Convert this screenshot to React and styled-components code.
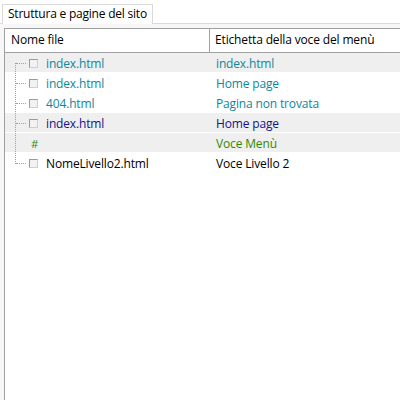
import React from "react";
import styled, { createGlobalStyle } from "styled-components";

const Global = createGlobalStyle`
  html, body { margin: 0; padding: 0; background: #ffffff; }
  body { font-family: "Open Sans", "Noto Sans", sans-serif; font-size: 12px; color: #000; }
  #root { width: 400px; height: 400px; overflow: hidden; }
`;

const Frame = styled.div`
  width: 400px;
  height: 400px;
  display: flex;
  flex-direction: column;
  background: #ffffff;
`;

const TabStrip = styled.div`
  height: 23px;
  display: flex;
  align-items: flex-end;
  padding-left: 2px;
  border-bottom: 1px solid #d9d9d9;
`;

const Tab = styled.div`
  height: 20px;
  box-sizing: border-box;
  padding: 0 5px 0 5px;
  border: 1px solid #d9d9d9;
  border-bottom: none;
  background: #ffffff;
  line-height: 18px;
  letter-spacing: -0.22px;
  margin-bottom: -1px;
`;

const Body = styled.div`
  flex: 1;
  display: flex;
  padding: 4px 0 0 4px;
  background: #f7f7f7;
`;

const Panel = styled.div`
  flex: 1;
  background: #ffffff;
  border-left: 1px solid #a0a0a0;
  border-top: 1px solid #a0a0a0;
`;

const Header = styled.div`
  display: grid;
  grid-template-columns: 205px 1fr;
  height: 23px;
  border-bottom: 1px solid #a0a0a0;
`;

const HeadCell = styled.div`
  padding-left: ${(p) => p.$pad}px;
  line-height: 22px;
  letter-spacing: -0.15px;
  border-right: ${(p) => (p.$sep ? "1px solid #a0a0a0" : "none")};
`;

const Row = styled.div`
  display: grid;
  grid-template-columns: 206px 1fr;
  height: 20px;
  box-sizing: border-box;
  border-bottom: 1px solid #ffffff;
  background: ${(p) => (p.$shade ? "#efefef" : "#ffffff")};
  color: ${(p) => p.$color};
  letter-spacing: -0.15px;
`;

const NameCell = styled.div`
  display: flex;
  align-items: center;
  padding-left: 10px;
  padding-bottom: 2px;
`;

const LabelCell = styled.div`
  display: flex;
  align-items: center;
  padding-left: 5px;
  padding-bottom: 2px;
`;

const Connector = styled.div`
  position: relative;
  width: 11px;
  height: 20px;
  align-self: flex-start;
  flex: none;
  &::before {
    content: "";
    position: absolute;
    left: 0;
    top: ${(p) => (p.$first ? "10px" : "0")};
    bottom: ${(p) => (p.$last ? "9px" : "-1px")};
    border-left: 1px dotted #a0a0a0;
  }
  &::after {
    content: "";
    display: ${(p) => (p.$branch ? "block" : "none")};
    position: absolute;
    left: 1px;
    top: 10px;
    width: 10px;
    border-top: 1px dotted #a0a0a0;
  }
`;

const Check = styled.span`
  width: 9px;
  height: 9px;
  box-sizing: border-box;
  border: 1px solid #9a9a9a;
  border-right-color: #cfcfcf;
  border-bottom-color: #cfcfcf;
  background: #f2f2f2;
  margin: 1px 8px 0 3px;
  flex: none;
`;

const Hash = styled.span`
  margin-left: 5px;
  color: #3b8a00;
  font-size: 11.5px;
`;

const rows = [
  { file: "index.html", label: "index.html", color: "#0e869c", shade: true },
  { file: "index.html", label: "Home page", color: "#0e869c" },
  { file: "404.html", label: "Pagina non trovata", color: "#0e869c" },
  { file: "index.html", label: "Home page", color: "#12128c", shade: true },
  { hash: true, label: "Voce Menù", color: "#2f8a00", shade: true },
  { file: "NomeLivello2.html", label: "Voce Livello 2", color: "#000000" },
];

export default function App() {
  return (
    <Frame>
      <Global />
      <TabStrip>
        <Tab>Struttura e pagine del sito</Tab>
      </TabStrip>
      <Body>
        <Panel>
          <Header>
            <HeadCell $pad={6} $sep>Nome file</HeadCell>
            <HeadCell $pad={5}>Etichetta della voce del menù</HeadCell>
          </Header>
          {rows.map((r, i) => (
            <Row key={i} $shade={r.shade} $color={r.color}>
              <NameCell>
                <Connector
                  $first={i === 0}
                  $last={i === rows.length - 1}
                  $branch={!r.hash}
                />
                {r.hash ? (
                  <Hash>#</Hash>
                ) : (
                  <>
                    <Check />
                    <span>{r.file}</span>
                  </>
                )}
              </NameCell>
              <LabelCell>{r.label}</LabelCell>
            </Row>
          ))}
        </Panel>
      </Body>
    </Frame>
  );
}
